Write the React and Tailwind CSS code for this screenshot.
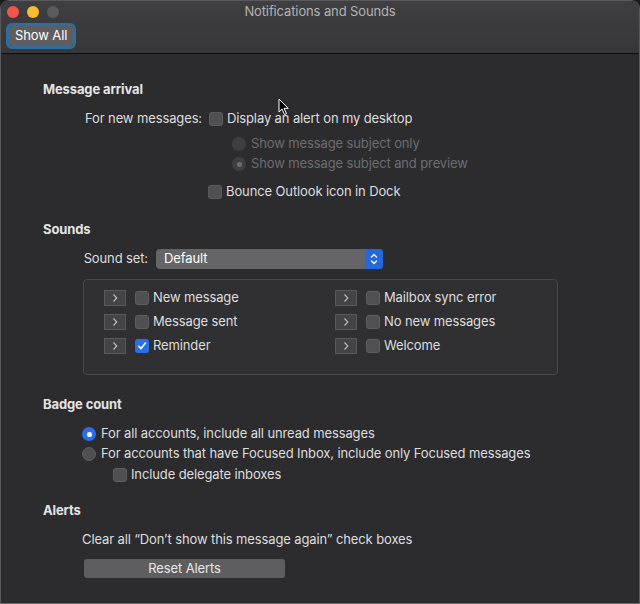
import React from "react";

const font = { fontFamily: "Inter, 'Liberation Sans', sans-serif", letterSpacing: "-0.12px" };

function Checkbox({ checked }) {
  if (checked) {
    return (
      <span className="flex h-[14px] w-[14px] shrink-0 items-center justify-center rounded-[3px] bg-[#2a6fe6]">
        <svg width="10" height="10" viewBox="0 0 10 10">
          <path d="M1.8 5.3 L4 7.6 L8.4 2" fill="none" stroke="white" strokeWidth="1.6" strokeLinecap="round" strokeLinejoin="round" />
        </svg>
      </span>
    );
  }
  return <span className="block h-[14px] w-[14px] shrink-0 rounded-[3px] border border-[#5e5e60] bg-[#505052]" />;
}

function Radio({ selected, disabled }) {
  if (selected && !disabled) {
    return (
      <span className="flex h-[14px] w-[14px] shrink-0 items-center justify-center rounded-full bg-[#2a6fe6]">
        <span className="block h-[5px] w-[5px] rounded-full bg-white" />
      </span>
    );
  }
  if (disabled) {
    return (
      <span className="flex h-[14px] w-[14px] shrink-0 items-center justify-center rounded-full bg-[#3f3f41]">
        {selected && <span className="block h-[5px] w-[5px] rounded-full bg-[#707072]" />}
      </span>
    );
  }
  return <span className="block h-[14px] w-[14px] shrink-0 rounded-full border border-[#5e5e60] bg-[#505052]" />;
}

function Arrow() {
  return (
    <span className="flex h-[16px] w-[22px] shrink-0 items-center justify-center border border-[#59595b] bg-[#444446]">
      <svg width="8" height="10" viewBox="0 0 8 10">
        <path d="M2.5 1.5 L5.8 5 L2.5 8.5" fill="none" stroke="#bdbdbd" strokeWidth="1.1" />
      </svg>
    </span>
  );
}

function SoundItem({ label, checked }) {
  return (
    <div className="flex h-[20px] items-center">
      <Arrow />
      <span className="ml-[9px]"><Checkbox checked={checked} /></span>
      <span className="ml-[4px]">{label}</span>
    </div>
  );
}

function Heading({ children, mt }) {
  return (
    <div className={`flex h-[20px] items-center pl-[42px] font-bold text-[#e4e4e4] ${mt}`}>{children}</div>
  );
}

export default function App() {
  return (
    <div className="h-[604px] w-[640px] bg-[#1c1c1c] text-[13px] text-[#dedede]" style={font}>
      <div className="relative flex h-[604px] w-[640px] flex-col overflow-hidden rounded-t-[9px] border border-[#5a5a5c] border-b-[#6a6a6a]">
        {/* Title bar */}
        <div className="flex h-[53px] shrink-0 flex-col border-b border-b-[#0e0e0e] bg-gradient-to-b from-[#3f3f41] to-[#373739]">
          <div className="relative flex h-[22px] items-center">
            <div className="flex items-center gap-[8px] pl-[6px]">
              <span className="block h-[12px] w-[12px] rounded-full bg-[#f2554d]" />
              <span className="block h-[12px] w-[12px] rounded-full bg-[#f8bd2e]" />
              <span className="block h-[12px] w-[12px] rounded-full bg-[#5b5b5d]" />
            </div>
            <div className="absolute inset-x-0 top-0 flex h-[22px] items-center justify-center text-[#b3b3b3]">
              Notifications and Sounds
            </div>
          </div>
          <div className="pl-[5px] pt-0">
            <div className="inline-flex rounded-[6px] border-[3px] border-[#2f6d9e]">
              <div className="flex h-[20px] items-center rounded-[3px] bg-[#5e5e60] px-[6px] text-white">Show All</div>
            </div>
          </div>
        </div>

        {/* Body */}
        <div className="flex flex-1 flex-col bg-[#2c2c2e] pt-[26px]">
          <Heading>Message arrival</Heading>
          <div className="mt-[9px] flex h-[20px] items-center">
            <span className="w-[201px] pr-0 text-right">For new messages:</span>
            <span className="ml-[7px]"><Checkbox /></span>
            <span className="ml-[4px]">Display an alert on my desktop</span>
          </div>
          <div className="mt-[5px] flex h-[20px] items-center pl-[231px] text-[#6d6d6f]">
            <Radio disabled />
            <span className="ml-[5px]">Show message subject only</span>
          </div>
          <div className="flex h-[20px] items-center pl-[231px] text-[#6d6d6f]">
            <Radio disabled selected />
            <span className="ml-[5px]">Show message subject and preview</span>
          </div>
          <div className="mt-[8px] flex h-[20px] items-center pl-[207px]">
            <Checkbox />
            <span className="ml-[4px]">Bounce Outlook icon in Dock</span>
          </div>

          <Heading mt="mt-[18px]">Sounds</Heading>
          <div className="mt-[9px] flex h-[20px] items-center">
            <span className="w-[147px] text-right">Sound set:</span>
            <div className="ml-[8px] flex h-[20px] w-[227px] items-center overflow-hidden rounded-[4px] bg-[#656567]">
              <span className="flex-1 pl-[8px] text-white">Default</span>
              <span className="flex h-[20px] w-[18px] items-center justify-center bg-[#2468dd]">
                <svg width="10" height="14" viewBox="0 0 10 14">
                  <path d="M2.5 5 L5 2.5 L7.5 5 M2.5 9 L5 11.5 L7.5 9" fill="none" stroke="white" strokeWidth="1.3" strokeLinecap="round" strokeLinejoin="round" />
                </svg>
              </span>
            </div>
          </div>

          <div className="ml-[82px] mt-[10px] h-[96px] w-[475px] rounded-[4px] border border-[#48484a] bg-[#303032] pl-[20px] pt-[8px]">
            <div className="flex">
              <div className="flex w-[231px] flex-col gap-[4px]">
                <SoundItem label="New message" />
                <SoundItem label="Message sent" />
                <SoundItem label="Reminder" checked />
              </div>
              <div className="flex flex-col gap-[4px]">
                <SoundItem label="Mailbox sync error" />
                <SoundItem label="No new messages" />
                <SoundItem label="Welcome" />
              </div>
            </div>
          </div>

          <Heading mt="mt-[20px]">Badge count</Heading>
          <div className="mt-[9px] flex h-[20px] items-center pl-[81px]">
            <Radio selected />
            <span className="ml-[5px]">For all accounts, include all unread messages</span>
          </div>
          <div className="flex h-[20px] items-center pl-[81px]">
            <Radio />
            <span className="ml-[5px]">For accounts that have Focused Inbox, include only Focused messages</span>
          </div>
          <div className="mt-[1px] flex h-[20px] items-center pl-[112px]">
            <Checkbox />
            <span className="ml-[4px]">Include delegate inboxes</span>
          </div>

          <Heading mt="mt-[16px]">Alerts</Heading>
          <div className="mt-[9px] flex h-[20px] items-center pl-[81px]">
            Clear all “Don’t show this message again” check boxes
          </div>
          <div className="mt-[9px] pl-[83px]">
            <div className="flex h-[19px] w-[201px] items-center justify-center rounded-[3px] bg-[#5e5e60] text-[#e8e8e8]">
              Reset Alerts
            </div>
          </div>
        </div>

        {/* mouse cursor */}
        <svg className="absolute left-[277px] top-[97px]" width="12" height="18" viewBox="0 0 12 18">
          <path d="M1 1 L1 14 L4 11 L6.5 16.5 L8.5 15.6 L6 10.3 L10.2 10.3 Z" fill="black" stroke="white" strokeWidth="1" strokeLinejoin="round" />
        </svg>
      </div>
    </div>
  );
}
